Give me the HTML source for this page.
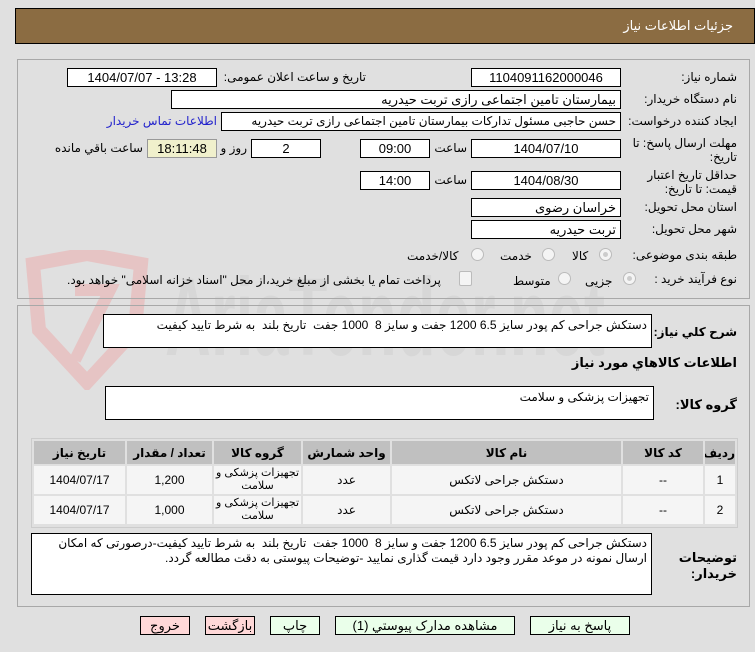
<!DOCTYPE html>
<html><head><meta charset="utf-8"><style>
body{margin:0;width:755px;height:652px;background:#e0e0e0;font-family:"Liberation Sans","DejaVu Sans",sans-serif;font-size:12px;color:#000;position:relative;overflow:hidden}
.a{position:absolute}
.in{position:absolute;background:#fff;border:1px solid #000;box-sizing:border-box;height:19px;line-height:17px;padding:0 4px;white-space:nowrap;overflow:hidden;font-size:13px}
.c{text-align:center}
.r{direction:rtl;text-align:right}
.lbl{position:absolute;direction:rtl;text-align:right;white-space:nowrap}
.panel{position:absolute;border:1px solid #a8a8a8;box-sizing:border-box}
.ta{position:absolute;background:#fff;border:1px solid #000;box-sizing:border-box;direction:rtl;text-align:right;padding:2px 4px;line-height:16px}
.rad{position:absolute;width:11px;height:11px;border:1px solid #bbb;border-radius:50%;background:#f4f4f4}
.rad.on::after{content:"";position:absolute;left:3px;top:3px;width:5px;height:5px;border-radius:50%;background:#ccc}
table{border-collapse:separate;border-spacing:2px;background:#e0e0e0;table-layout:fixed}
td,th{padding:0;text-align:center;direction:rtl;overflow:hidden;white-space:nowrap}
th{background:#c0c0c0;height:23px;font-weight:bold;font-size:12px}
td{background:#f5f5f5;height:28px}
.btn{position:absolute;top:616px;height:19px;border:1px solid #000;box-sizing:border-box;text-align:center;line-height:17px;direction:rtl;font-size:13px}
.g{background:#eaffea}.p{background:#ffd8d8}
</style></head><body>
<div class="a" style="left:15px;top:8px;width:740px;height:36px;background:#8b6c42;border:1px solid #000;box-sizing:border-box"></div>
<div class="lbl" style="top:18px;color:#fff;font-size:13px;right:22px">جزئیات اطلاعات نیاز</div>

<svg class="a" style="left:15px;top:250px" width="600" height="140">
<path d="M18 14 L72 4 L126 14 L120 80 L72 132 L24 80 Z" fill="none" stroke="#e6c4c4" stroke-width="14"/>
<path d="M60 40 L95 40 L80 70 L60 110" fill="none" stroke="#e6c4c4" stroke-width="12"/>
<text x="150" y="105" font-family="Liberation Sans Narrow, Liberation Sans" font-size="110" font-weight="bold" fill="#d2d2d2" opacity="0.6" textLength="440" lengthAdjust="spacingAndGlyphs">AriaTender.net</text>
</svg>

<div class="panel" style="left:17px;top:59px;width:733px;height:240px"></div>
<div class="panel" style="left:17px;top:305px;width:733px;height:302px"></div>

<div class="lbl" style="right:18px;top:70px">شماره نیاز:</div>
<div class="in c" style="left:471px;top:68px;width:150px">1104091162000046</div>
<div class="lbl" style="right:389px;top:70px">تاریخ و ساعت اعلان عمومی:</div>
<div class="in c" style="left:67px;top:68px;width:150px">1404/07/07 - 13:28</div>

<div class="lbl" style="right:18px;top:92px">نام دستگاه خریدار:</div>
<div class="in r" style="left:171px;top:90px;width:450px">بیمارستان تامین اجتماعی رازی تربت حیدریه</div>

<div class="lbl" style="right:18px;top:114px">ایجاد کننده درخواست:</div>
<div class="in r" style="left:221px;top:112px;width:400px;font-size:12px">حسن حاجبی مسئول تدارکات بیمارستان تامین اجتماعی رازی تربت حیدریه</div>
<div class="lbl" style="right:538px;top:114px;color:#2222cc">اطلاعات تماس خریدار</div>

<div class="lbl" style="right:18px;top:136px;line-height:14px">مهلت ارسال پاسخ: تا<br>تاریخ:</div>
<div class="in c" style="left:471px;top:139px;width:150px">1404/07/10</div>
<div class="lbl" style="right:288px;top:141px">ساعت</div>
<div class="in c" style="left:360px;top:139px;width:70px">09:00</div>
<div class="in c" style="left:251px;top:139px;width:70px">2</div>
<div class="lbl" style="right:508px;top:141px">روز و</div>
<div class="in c" style="left:147px;top:139px;width:70px;background:#f0f0cc;border-color:#999">18:11:48</div>
<div class="lbl" style="right:612px;top:141px">ساعت باقي مانده</div>

<div class="lbl" style="right:18px;top:168px;line-height:14px">حداقل تاریخ اعتبار<br>قیمت: تا تاریخ:</div>
<div class="in c" style="left:471px;top:171px;width:150px">1404/08/30</div>
<div class="lbl" style="right:288px;top:173px">ساعت</div>
<div class="in c" style="left:360px;top:171px;width:70px">14:00</div>

<div class="lbl" style="right:18px;top:200px">استان محل تحویل:</div>
<div class="in r" style="left:471px;top:198px;width:150px">خراسان رضوی</div>
<div class="lbl" style="right:18px;top:222px">شهر محل تحویل:</div>
<div class="in r" style="left:471px;top:220px;width:150px">تربت حیدریه</div>

<div class="lbl" style="right:18px;top:248px">طبقه بندی موضوعی:</div>
<div class="rad on" style="left:599px;top:248px"></div>
<div class="lbl" style="left:572px;top:249px">کالا</div>
<div class="rad" style="left:542px;top:248px"></div>
<div class="lbl" style="left:500px;top:249px">خدمت</div>
<div class="rad" style="left:471px;top:248px"></div>
<div class="lbl" style="left:407px;top:249px">کالا/خدمت</div>

<div class="lbl" style="right:18px;top:272px">نوع فرآیند خرید :</div>
<div class="rad on" style="left:623px;top:272px"></div>
<div class="lbl" style="left:585px;top:274px">جزیی</div>
<div class="rad" style="left:558px;top:272px"></div>
<div class="lbl" style="left:513px;top:274px">متوسط</div>
<div class="a" style="left:459px;top:271px;width:11px;height:13px;border:1px solid #bbb;background:#f4f4f4;border-radius:2px"></div>
<div class="lbl" style="left:67px;top:273px;font-size:12px">پرداخت تمام یا بخشی از مبلغ خرید،از محل "اسناد خزانه اسلامی" خواهد بود.</div>

<div class="lbl" style="right:18px;top:325px;font-weight:bold;font-size:12px">شرح کلي نياز:</div>
<div class="ta" style="left:103px;top:314px;width:549px;height:34px">دستکش جراحی کم پودر سایز 6.5 1200 جفت و سایز 8&nbsp; 1000 جفت&nbsp; تاریخ بلند&nbsp; به شرط تایید کیفیت</div>
<div class="lbl" style="right:18px;top:355px;font-weight:bold;font-size:13px">اطلاعات کالاهاي مورد نياز</div>
<div class="lbl" style="right:18px;top:397px;font-weight:bold;font-size:13px">گروه کالا:</div>
<div class="ta" style="left:105px;top:386px;width:549px;height:34px">تجهیزات پزشکی و سلامت</div>

<div class="a" style="left:31px;top:438px;width:707px;height:90px;border:1px solid #ccc;box-sizing:border-box"></div>
<table class="a" style="left:32px;top:439px;width:705px" dir="rtl">
<colgroup><col style="width:30px"><col style="width:80px"><col><col style="width:87px"><col style="width:87px"><col style="width:85px"><col style="width:91px"></colgroup>
<tr><th>ردیف</th><th>کد کالا</th><th>نام کالا</th><th>واحد شمارش</th><th>گروه کالا</th><th>تعداد / مقدار</th><th>تاریخ نیاز</th></tr>
<tr><td>1</td><td>--</td><td>دستکش جراحی لاتکس</td><td>عدد</td><td style="line-height:13px;font-size:11px">تجهیزات پزشکی و<br>سلامت</td><td>1,200</td><td>1404/07/17</td></tr>
<tr><td>2</td><td>--</td><td>دستکش جراحی لاتکس</td><td>عدد</td><td style="line-height:13px;font-size:11px">تجهیزات پزشکی و<br>سلامت</td><td>1,000</td><td>1404/07/17</td></tr>
</table>

<div class="lbl" style="right:18px;top:550px;font-weight:bold;line-height:16px;font-size:13px">توضیحات<br>خریدار:</div>
<div class="ta" style="left:31px;top:533px;width:621px;height:62px;line-height:15px">دستکش جراحی کم پودر سایز 6.5 1200 جفت و سایز 8&nbsp; 1000 جفت&nbsp; تاریخ بلند&nbsp; به شرط تایید کیفیت-درصورتی که امکان ارسال نمونه در موعد مقرر وجود دارد قیمت گذاری نمایید -توضیحات پیوستی به دقت مطالعه گردد.</div>

<div class="btn p" style="left:140px;width:50px">خروج</div>
<div class="btn p" style="left:205px;width:50px">بازگشت</div>
<div class="btn g" style="left:270px;width:50px">چاپ</div>
<div class="btn g" style="left:335px;width:180px">مشاهده مدارک پیوستي (1)</div>
<div class="btn g" style="left:530px;width:100px">پاسخ به نیاز</div>
</body></html>
